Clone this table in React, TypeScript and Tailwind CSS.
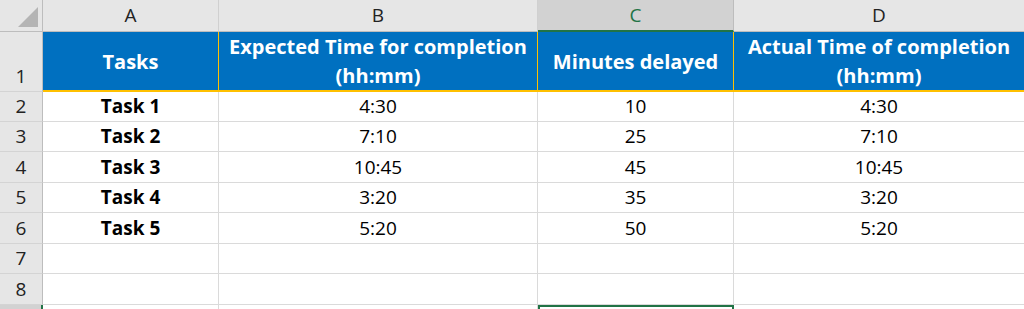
import React from "react";

const font = { fontFamily: '"Open Sans", "Noto Sans", sans-serif' };

const rows = [
  ["Task 1", "4:30", "10", "4:30"],
  ["Task 2", "7:10", "25", "7:10"],
  ["Task 3", "10:45", "45", "10:45"],
  ["Task 4", "3:20", "35", "3:20"],
  ["Task 5", "5:20", "50", "5:20"],
  ["", "", "", ""],
  ["", "", "", ""],
];

const heights = ["h-[30px]", "h-[30px]", "h-[31px]", "h-[30px]", "h-[31px]", "h-[30px]", "h-[31px]"];

export default function App() {
  return (
    <div className="w-[1024px] h-[309px] overflow-hidden bg-white text-[#222]" style={font}>
      <div className="grid grid-cols-[43px_176px_319px_196px_1fr]">
        {/* column header row */}
        <div className="h-[32px] bg-[#e6e6e6] border-r border-b border-[#bdbdbd] flex items-end justify-end p-[3px]">
          <svg width="22" height="22" viewBox="0 0 22 22">
            <polygon points="21,1 21,21 1,21" fill="#b4b4b4" />
          </svg>
        </div>
        <div className="h-[32px] bg-[#e6e6e6] border-r border-b border-[#d0d0d0] border-b-[#bdbdbd] flex items-center justify-center text-[19px]">A</div>
        <div className="h-[32px] bg-[#e6e6e6] border-r border-b border-[#d0d0d0] border-b-[#bdbdbd] flex items-center justify-center text-[19px]">B</div>
        <div className="h-[32px] bg-[#d2d2d2] border-r border-[#bdbdbd] border-b-2 border-b-[#217346] flex items-center justify-center text-[19px] text-[#217346]">C</div>
        <div className="h-[32px] bg-[#e6e6e6] border-b border-[#bdbdbd] flex items-center justify-center text-[19px]">D</div>

        {/* row 1 */}
        <div className="h-[60px] bg-[#e6e6e6] border-r border-b border-[#bdbdbd] border-b-[#d4d4d4] flex items-end justify-center pb-[1px] text-[19px]">1</div>
        <div className="h-[60px] bg-[#0070c0] border-r border-[#ffc000] border-b-2 flex items-center justify-center text-white font-bold text-[20px] leading-[29px] text-center">Tasks</div>
        <div className="h-[60px] bg-[#0070c0] border-r border-[#ffc000] border-b-2 flex items-center justify-center text-white font-bold text-[20px] leading-[29px] text-center">
          Expected Time for completion
          <br />
          (hh:mm)
        </div>
        <div className="h-[60px] bg-[#0070c0] border-r border-[#ffc000] border-b-2 flex items-center justify-center text-white font-bold text-[20px] leading-[29px] text-center">Minutes delayed</div>
        <div className="h-[60px] bg-[#0070c0] border-[#ffc000] border-b-2 flex items-center justify-center text-white font-bold text-[20px] leading-[29px] text-center">
          Actual Time of completion
          <br />
          (hh:mm)
        </div>

        {rows.map((r, i) => (
          <React.Fragment key={i}>
            <div className={`${heights[i]} bg-[#e6e6e6] border-r border-b border-[#bdbdbd] border-b-[#d4d4d4] flex items-center justify-center text-[19px]`}>{i + 2}</div>
            <div className={`${heights[i]} border-r border-b border-[#dadada] flex items-center justify-center font-bold text-[19px] text-black`}>{r[0]}</div>
            <div className={`${heights[i]} border-r border-b border-[#dadada] flex items-center justify-center text-[19px] text-black`}>{r[1]}</div>
            <div className={`${heights[i]} border-r border-b border-[#dadada] flex items-center justify-center text-[19px] text-black`}>{r[2]}</div>
            <div className={`${heights[i]} border-b border-[#dadada] flex items-center justify-center text-[19px] text-black`}>{r[3]}</div>
          </React.Fragment>
        ))}

        {/* row 9 (partially visible) */}
        <div className="h-[30px] bg-[#d2d2d2] border-r-2 border-[#217346]"></div>
        <div className="h-[30px] border-r border-[#dadada]"></div>
        <div className="h-[30px] border-r border-[#dadada]"></div>
        <div className="h-[30px] border-2 border-[#217346]"></div>
        <div className="h-[30px]"></div>
      </div>
    </div>
  );
}
